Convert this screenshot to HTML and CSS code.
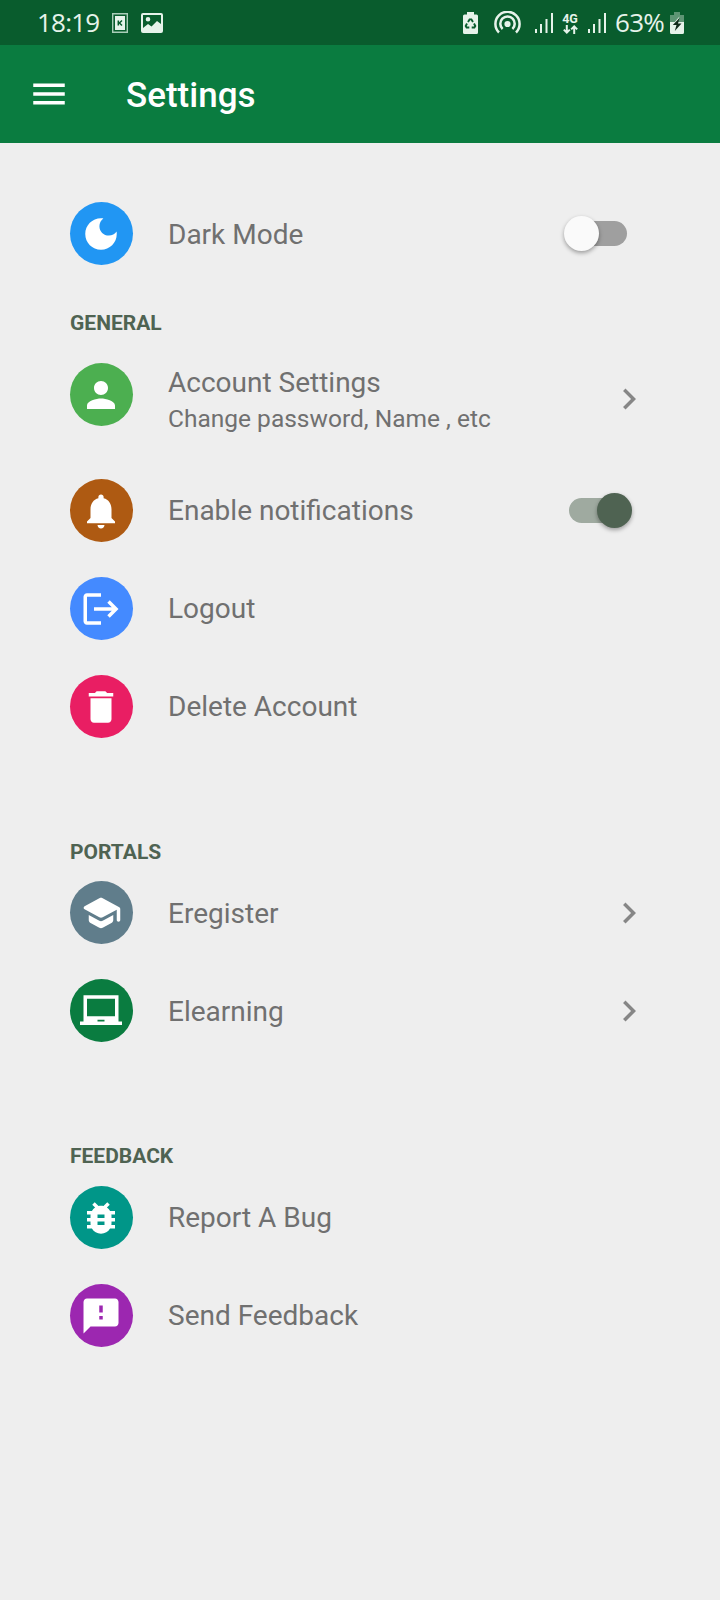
FILE: index.html
```html
<!DOCTYPE html>
<html lang="en">
<head>
<meta charset="utf-8">
<title>Settings</title>
<link rel="stylesheet" href="styles.css">
</head>
<body>
<div class="status">
  <span class="clock">18:19</span>
  <svg class="s-card" width="16" height="20" viewBox="0 0 16 20"><path fill="none" stroke="#a9cdb8" stroke-width="1.4" d="M.7.7h14.6v18.6H.7z"/><path fill="#e6f3ea" d="M3 3h10v14H3z"/><path fill="none" stroke="#095c2d" stroke-width="1.5" d="M6.300 7.500v5M10 7.500L7.400 10l2.600 2.500"/></svg>
  <svg class="s-image" width="22" height="20" viewBox="0 0 22 20"><path fill="#e6f3ea" fill-rule="evenodd" d="M2 0h18a2 2 0 0 1 2 2v16a2 2 0 0 1-2 2H2a2 2 0 0 1-2-2V2a2 2 0 0 1 2-2zm0 2v13l5-4 3.500 2.500L16 8l4 3V2zM7 4a2.300 2.300 0 1 1 0 4.600A2.300 2.300 0 0 1 7 4z"/></svg>
  <span class="spacer"></span>
  <svg class="s-recycle" width="15" height="22" viewBox="0 0 15 22"><path fill="#e6f3ea" d="M4 0h7v2.500h2.500A1.500 1.500 0 0 1 15 4v16.500a1.500 1.500 0 0 1-1.500 1.500h-12A1.500 1.500 0 0 1 0 20.500V4a1.500 1.500 0 0 1 1.500-1.500H4z"/><path fill="none" stroke="#095c2d" stroke-width="1.900" d="M5 10l1.600-2.600h1.800L10 10M11 11.500l1.300 2.500-.9 1.500H8.700M6.300 15.500H3.600L2.700 14 4 11.500"/></svg>
  <svg class="s-hotspot" width="27" height="23" viewBox="0 0 27 23"><g fill="none" stroke="#e6f3ea" stroke-width="2.500"><path d="M5 21.500a12.100 12.100 0 1 1 17 0"/><path d="M8.600 18a7.200 7.200 0 1 1 9.800 0"/></g><circle cx="13.500" cy="13" r="3.100" fill="#e6f3ea"/></svg>
  <svg class="s-signal" width="18" height="20" viewBox="0 0 18 20"><path fill="#e6f3ea" d="M0 16h2v4H0zM5 11h2v9H5zM10.500 6h2v14h-2zM16 0h2v20h-2z"/></svg>
  <span class="network"><b>4G</b><svg width="15" height="9" viewBox="0 0 15 9"><path fill="none" stroke="#e6f3ea" stroke-width="2" d="M3.800 0v7.500M.8 4.600l3 3 3-3M11.200 9V1.500M8.200 4.400l3-3 3 3"/></svg></span>
  <svg class="s-signal2" width="18" height="20" viewBox="0 0 18 20"><path fill="#e6f3ea" d="M0 16h2v4H0zM5 11h2v9H5zM10.500 6h2v14h-2zM16 0h2v20h-2z"/></svg>
  <span class="percent">63%</span>
  <svg class="s-battery" width="14" height="22" viewBox="0 0 14 22"><path fill="#5e9574" d="M4 0h6v3h4v8H0V3h4z"/><path fill="#e6f3ea" d="M0 10h14v10.500a1.500 1.500 0 0 1-1.500 1.500h-11A1.500 1.500 0 0 1 0 20.500z"/><path fill="#e6f3ea" d="M9.500 4.500L3 12h4z"/><path fill="#102a1a" d="M9.500 6L2.800 13h3.700l-1.700 6L11.500 11.500H8z"/></svg>
</div>
<header class="appbar">
  <svg class="icon" viewBox="0 0 24 24"><path d="M3 18h18v-2H3v2zm0-5h18v-2H3v2zm0-7v2h18V6H3z"/></svg>
  <h1 class="title">Settings</h1>
</header>
<main class="list">
  <div class="row">
    <span class="avatar blue"><svg class="icon" viewBox="0 0 24 24"><path d="M12 3c-4.970 0-9 4.030-9 9s4.030 9 9 9 9-4.030 9-9c0-.46-.04-.92-.1-1.360-.98 1.370-2.580 2.260-4.400 2.260-2.980 0-5.400-2.420-5.400-5.400 0-1.810.89-3.420 2.260-4.400-.44-.06-.9-.1-1.360-.1z"/></svg></span>
    <span class="label low">Dark Mode</span>
    <span class="switch"><i class="thumb"></i></span>
  </div>

  <h2 class="heading general">GENERAL</h2>
  <div class="row tall">
    <span class="avatar green"><svg class="icon" viewBox="0 0 24 24"><path d="M12 12c2.210 0 4-1.790 4-4s-1.790-4-4-4-4 1.790-4 4 1.790 4 4 4zm0 2c-2.670 0-8 1.340-8 4v2h16v-2c0-2.660-5.330-4-8-4z"/></svg></span>
    <span class="label double">Account Settings<small class="sub">Change password, Name , etc</small></span>
    <svg class="icon chevron" viewBox="0 0 24 24"><path d="M10 6L8.590 7.410 13.170 12l-4.580 4.590L10 18l6-6z"/></svg>
  </div>
  <div class="row">
    <span class="avatar brown"><svg class="icon" viewBox="0 0 24 24"><path d="M12 22c1.100 0 2-.9 2-2h-4c0 1.100.89 2 2 2zm6-6v-5c0-3.070-1.640-5.640-4.500-6.320V4c0-.83-.67-1.500-1.500-1.500s-1.500.67-1.500 1.500v.68C7.630 5.360 6 7.920 6 11v5l-2 2v1h16v-1l-2-2z"/></svg></span>
    <span class="label">Enable notifications</span>
    <span class="switch on"><i class="thumb"></i></span>
  </div>
  <div class="row">
    <span class="avatar indigo"><svg class="icon" viewBox="0 0 24 24"><path d="M12 3v2H4v14h8v2H4c-1.100 0-2-.9-2-2V5c0-1.100.9-2 2-2h8zM8 11h10.170l-2.580-2.590L17 7l5 5-5 5-1.410-1.410L18.170 13H8z"/></svg></span>
    <span class="label">Logout</span>
  </div>
  <div class="row">
    <span class="avatar pink"><svg class="icon" viewBox="0 0 24 24"><path d="M6 19c0 1.100.9 2 2 2h8c1.100 0 2-.9 2-2V7H6v12zM19 4h-3.500l-1-1h-5l-1 1H5v2h14V4z"/></svg></span>
    <span class="label">Delete Account</span>
  </div>

  <h2 class="heading portals">PORTALS</h2>
  <div class="row">
    <span class="avatar slate"><svg class="icon" viewBox="0 0 24 24"><path d="M5 13.180v2.810c0 .73.4 1.410 1.040 1.760l5 2.730c.6.33 1.320.33 1.920 0l5-2.730c.64-.35 1.040-1.030 1.040-1.760v-2.810l-6.040 3.300c-.6.33-1.320.33-1.920 0L5 13.180zm6.040-9.660l-8.430 4.600c-.69.38-.69 1.380 0 1.760l8.430 4.600c.6.33 1.320.33 1.920 0L21 10.090V16c0 .55.45 1 1 1s1-.45 1-1V9.590c0-.37-.2-.7-.52-.88l-9.520-5.190c-.6-.32-1.320-.32-1.920 0z"/></svg></span>
    <span class="label low">Eregister</span>
    <svg class="icon chevron" viewBox="0 0 24 24"><path d="M10 6L8.590 7.410 13.170 12l-4.580 4.590L10 18l6-6z"/></svg>
  </div>
  <div class="row">
    <span class="avatar forest"><svg class="icon" viewBox="0 0 24 24"><path d="M22 18V3H2v15H0v2h24v-2h-2zm-8 0h-4v-1h4v1zm6-3H4V5h16v10z"/></svg></span>
    <span class="label low">Elearning</span>
    <svg class="icon chevron" viewBox="0 0 24 24"><path d="M10 6L8.590 7.410 13.170 12l-4.580 4.590L10 18l6-6z"/></svg>
  </div>

  <h2 class="heading feedback">FEEDBACK</h2>
  <div class="row">
    <span class="avatar teal"><svg class="icon" viewBox="0 0 24 24"><path d="M20 8h-2.810c-.45-.78-1.070-1.450-1.820-1.960L17 4.410 15.590 3l-2.170 2.170C12.960 5.060 12.490 5 12 5c-.49 0-.96.06-1.410.17L8.410 3 7 4.410l1.620 1.630C7.880 6.550 7.260 7.220 6.810 8H4v2h2.090c-.05.33-.09.66-.09 1v1H4v2h2v1c0 .34.04.67.09 1H4v2h2.810c1.040 1.790 2.970 3 5.190 3s4.150-1.210 5.190-3H20v-2h-2.090c.05-.33.09-.66.09-1v-1h2v-2h-2v-1c0-.34-.04-.67-.09-1H20V8zm-6 8h-4v-2h4v2zm0-4h-4v-2h4v2z"/></svg></span>
    <span class="label">Report A Bug</span>
  </div>
  <div class="row">
    <span class="avatar purple"><svg class="icon" viewBox="0 0 24 24"><path d="M20 2H4c-1.100 0-1.990.9-1.990 2L2 22l4-4h14c1.100 0 2-.9 2-2V4c0-1.100-.9-2-2-2zm-7 12h-2v-2h2v2zm0-4h-2V6h2v4z"/></svg></span>
    <span class="label">Send Feedback</span>
  </div>
</main>
</body>
</html>
```
FILE: styles.css
```css
* { box-sizing: border-box; }
body {
  margin: 0;
  width: 720px;
  min-height: 1600px;
  background: #eee;
  font-family: Roboto, "Liberation Sans", sans-serif;
  color: #707070;
}
svg { display: block; flex: none; }

.status {
  display: flex;
  align-items: center;
  height: 45px;
  padding: 0 36px 0 37px;
  background: #095c2d;
  color: #e6f3ea;
  font-family: "Open Sans", "Noto Sans", sans-serif;
  font-size: 26px;
  line-height: 45px;
}
.clock { width: 75px; letter-spacing: -0.8px; white-space: nowrap; }
.s-image { margin-left: 13px; }
.spacer { flex: 1; }
.s-hotspot { margin-left: 16px; }
.s-signal { margin-left: 14px; }
.network {
  display: flex;
  flex-direction: column;
  align-items: center;
  width: 16px;
  margin: 0 10px 0 9px;
}
.network b {
  font: 700 12.5px/13px Roboto, sans-serif;
}
.percent { margin-left: 9px; width: 55px; letter-spacing: -0.7px; white-space: nowrap; }

.appbar {
  display: flex;
  align-items: center;
  height: 98px;
  padding-left: 28px;
  background: #0a7c40;
  color: #fff;
}
.title {
  margin: 0 0 0 56px;
  padding-top: 4px;
  font-size: 35px;
  font-weight: 500;
  line-height: 40px;
}
.icon { width: 42px; height: 42px; fill: currentColor; }

.list { padding: 41.5px 70px 0; }
.row { display: flex; align-items: center; height: 98px; }
.row.tall { height: 125.5px; }
.tall .avatar { align-self: flex-start; margin-top: 27px; }
.avatar {
  display: flex;
  align-items: center;
  justify-content: center;
  flex: none;
  width: 63px;
  height: 63px;
  padding-right: 1px;
  border-radius: 50%;
  color: #fff;
}
.blue { background: #2196f3; }
.green { background: #4caf50; }
.brown { background: #ae5a12; }
.indigo { background: #448aff; }
.pink { background: #e91e63; }
.slate { background: #607d8b; }
.forest { background: #0a7c40; }
.teal { background: #009688; }
.purple { background: #9c27b0; }

.label { flex: 1; margin-left: 35px; font-size: 28px; line-height: 34px; }
.label.low { padding-top: 2px; }
.label.double { padding-top: 6px; }
.sub { display: block; font-size: 24.5px; line-height: 38px; }
.chevron { color: #868686; }

.heading {
  margin: 0;
  font-size: 21px;
  font-weight: 700;
  line-height: 23px;
  color: #4f6352;
}
.general { height: 53.5px; padding-top: 29.5px; }
.portals { height: 108px; padding-top: 85.5px; }
.feedback { height: 109px; padding-top: 85px; }

.switch {
  display: flex;
  align-items: center;
  width: 58px;
  height: 24.5px;
  margin-right: 23px;
  border-radius: 13px;
  background: #9f9f9f;
}
.thumb {
  flex: none;
  width: 35px;
  height: 35px;
  margin-left: -5px;
  border-radius: 50%;
  background: #fafafa;
  box-shadow: 0 2px 4px rgba(0, 0, 0, .35);
}
.switch.on { background: #9faaa0; justify-content: flex-end; }
.on .thumb { margin: 0 -5px 0 0; background: #4f6352; }
```
